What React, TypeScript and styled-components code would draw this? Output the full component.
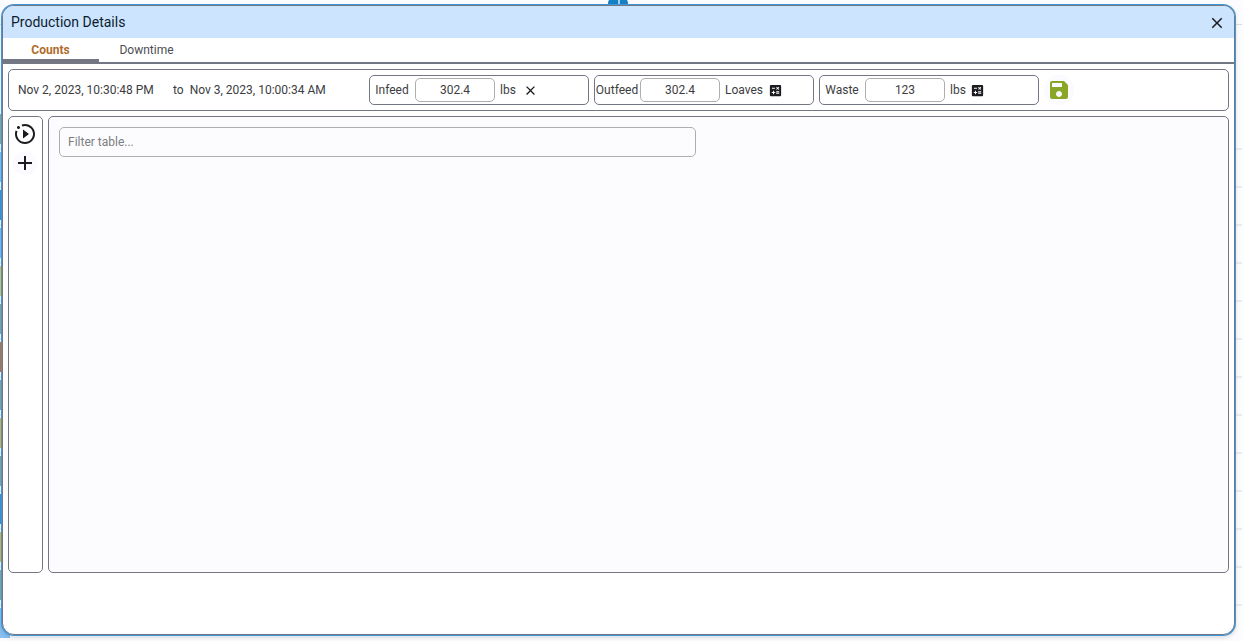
import React, { useState } from "react";
import styled, { createGlobalStyle } from "styled-components";
import { MdAdd, MdCalculate, MdClose, MdSave } from "react-icons/md";

const slate = "#737783";

const GlobalStyle = createGlobalStyle`
  * { box-sizing: border-box; }
  html, body, #root { height: 100%; }
  body {
    margin: 0;
    background: #fcfcff;
    color: #3c3d42;
    font: 12px/16px Roboto, "Liberation Sans", sans-serif;
  }
  button, input { font: inherit; color: inherit; }
`;

const Page = styled.div`
  position: relative;
  height: 100vh;
  overflow: hidden;
`;

const Schedule = styled.div`
  display: flex;
  flex-direction: column;
  height: 100%;
  padding-top: 24px;
`;

const ScheduleHead = styled.div`
  flex: none;
  height: 88px;
  border-top: 1px solid #dcdce0;
`;

const ScheduleRow = styled.div`
  flex: none;
  height: 38px;
  padding: 2px 0 6px;
  border-bottom: 2px solid #ececf0;
`;

const ScheduleBar = styled.div<{ $color: string }>`
  width: 10px;
  height: 30px;
  background: ${(p) => p.$color};
`;

const Marker = styled.div`
  position: absolute;
  top: -2px;
  left: 608px;
  width: 20px;
  height: 10px;
  border-radius: 5px;
  background: linear-gradient(90deg, #1580c4 10px, #a9cfe8 10px 12px, #1580c4 12px);
`;

const Dialog = styled.section`
  position: absolute;
  inset: 5px 7px 6px 2px;
  display: flex;
  flex-direction: column;
  overflow: hidden;
  padding-bottom: 61px;
  border: 1px solid ${slate};
  border-radius: 12px;
  background: #fff;
  box-shadow: 0 0 0 1px #3f97dc, 0 2px 4px 1px rgba(0, 0, 0, 0.12);
`;

const TitleBar = styled.header`
  display: flex;
  flex: none;
  align-items: flex-start;
  justify-content: space-between;
  height: 32px;
  padding: 6px 6px 0 8px;
  background: #cde4ff;
`;

const Title = styled.h1`
  margin: 0;
  color: #0b1d2e;
  font-size: 14px;
  font-weight: 400;
  line-height: 20px;
`;

const IconButton = styled.button<{ $size: number; $color?: string; $tint?: boolean }>`
  display: flex;
  flex: none;
  align-items: center;
  justify-content: center;
  width: ${(p) => p.$size}px;
  height: ${(p) => p.$size}px;
  padding: 0;
  border: 0;
  border-radius: 50%;
  background: ${(p) => (p.$tint ? "#fafaff" : "transparent")};
  color: ${(p) => p.$color ?? "#1b1b1f"};
  cursor: pointer;
`;

const Tabs = styled.nav`
  display: flex;
  flex: none;
  height: 26px;
  border-bottom: 2px solid ${slate};
`;

const Tab = styled.button<{ $active: boolean }>`
  width: 96px;
  padding: 2px 1px 0 0;
  border: 0;
  border-bottom: 3px solid ${(p) => (p.$active ? slate : "transparent")};
  background: none;
  color: ${(p) => (p.$active ? "#b06c2c" : "#4c4e54")};
  font-weight: ${(p) => (p.$active ? 700 : 400)};
  line-height: 20px;
  cursor: pointer;
`;

const Panel = styled.div`
  border: 1px solid ${slate};
  border-radius: 5px;
`;

const Toolbar = styled(Panel)`
  display: flex;
  flex: none;
  align-items: center;
  gap: 5px;
  height: 42px;
  margin: 5px;
  padding-left: 9px;
`;

const Period = styled.div`
  display: flex;
  width: 346px;
`;

const PeriodStart = styled.time`
  width: 155px;
`;

const PeriodEnd = styled.time`
  margin-left: 6px;
`;

const CountBox = styled(Panel)`
  display: flex;
  align-items: center;
  width: 220px;
  height: 30px;
`;

const CountLabel = styled.label`
  width: 45px;
  padding-right: 1px;
  text-align: center;
`;

const CountInput = styled.input`
  width: 80px;
  height: 24px;
  padding: 0;
  border: 1px solid #aeaeb2;
  border-radius: 5px;
  background: #fff;
  text-align: center;
`;

const Unit = styled.span`
  margin: 0 2px 0 5px;
`;

const Body = styled.div`
  display: flex;
  flex: 1;
  gap: 5px;
  min-height: 0;
  margin: 0 5px;
`;

const SideBar = styled(Panel)`
  display: flex;
  flex-direction: column;
  align-items: flex-start;
  gap: 5px;
  width: 35px;
  padding: 5px 4px 0;
`;

const Content = styled(Panel)`
  flex: 1;
  padding: 10px;
  background: #fcfcff;
`;

const FilterInput = styled.input`
  display: block;
  width: 55%;
  height: 30px;
  padding: 0 8px;
  border: 1px solid #aeaeb2;
  border-radius: 5px;
  background: transparent;
  &::placeholder { color: #7c7d82; opacity: 1; }
`;

const MotionPlayIcon = () => (
  <svg width="24" height="24" viewBox="0 0 24 24" fill="currentColor" aria-hidden="true">
    <path d="M22 12c0-5.54-4.46-10-10-10-1.17 0-2.3.19-3.38.56l.7 1.94c.85-.34 1.74-.53 2.68-.53 4.41 0 8.03 3.62 8.03 8.03s-3.62 8.03-8.03 8.03-8.03-3.62-8.03-8.03c0-.94.19-1.88.53-2.72l-1.94-.66C2.19 9.7 2 10.83 2 12c0 5.54 4.46 10 10 10s10-4.46 10-10M5.47 3.97c.85 0 1.53.71 1.53 1.5C7 6.32 6.32 7 5.47 7c-.79 0-1.5-.68-1.5-1.53 0-.79.71-1.5 1.5-1.5M10 16.5v-9l6 4.5" />
  </svg>
);

const rowColors = [
  "#a3a58c", "#88c0f0", "#3b94dd", "#88bdf0", "#f5c43c", "#9aa58c", "#ff6200",
  "#9aa58c", "#f5b51c", "#9aa58c", "#3b94dd", "#f5b51c", "#9aa58c", "#88c0f0",
];

const counts = [
  { id: "infeed", label: "Infeed", value: "302.4", unit: "lbs", manual: true },
  { id: "outfeed", label: "Outfeed", value: "302.4", unit: "Loaves", manual: false },
  { id: "waste", label: "Waste", value: "123", unit: "lbs", manual: false },
];

const tabs = ["Counts", "Downtime"];

export default function App() {
  const [tab, setTab] = useState("Counts");
  return (
    <Page>
      <GlobalStyle />
      <Schedule aria-hidden="true">
        <ScheduleHead />
        {rowColors.map((color, i) => (
          <ScheduleRow key={i}>
            <ScheduleBar $color={color} />
          </ScheduleRow>
        ))}
      </Schedule>
      <Marker />
      <Dialog role="dialog" aria-labelledby="dialog-title">
        <TitleBar>
          <Title id="dialog-title">Production Details</Title>
          <IconButton $size={22} aria-label="Close">
            <MdClose size={18} />
          </IconButton>
        </TitleBar>
        <Tabs>
          {tabs.map((name) => (
            <Tab key={name} type="button" $active={tab === name} onClick={() => setTab(name)}>
              {name}
            </Tab>
          ))}
        </Tabs>
        <Toolbar>
          <Period>
            <PeriodStart>Nov 2, 2023, 10:30:48 PM</PeriodStart>
            <span>to</span>
            <PeriodEnd>Nov 3, 2023, 10:00:34 AM</PeriodEnd>
          </Period>
          {counts.map((c) => (
            <CountBox key={c.id}>
              <CountLabel htmlFor={c.id}>{c.label}</CountLabel>
              <CountInput id={c.id} defaultValue={c.value} />
              <Unit>{c.unit}</Unit>
              <IconButton
                $size={c.manual ? 26 : 20}
                aria-label={c.manual ? `Clear ${c.label}` : `Calculate ${c.label}`}
              >
                {c.manual ? <MdClose size={15} /> : <MdCalculate size={15} />}
              </IconButton>
            </CountBox>
          ))}
          <IconButton $size={30} $color="#8aa626" $tint aria-label="Save">
            <MdSave size={24} />
          </IconButton>
        </Toolbar>
        <Body>
          <SideBar>
            <IconButton $size={24} aria-label="Replay">
              <MotionPlayIcon />
            </IconButton>
            <IconButton $size={24} $tint aria-label="Add">
              <MdAdd size={24} />
            </IconButton>
          </SideBar>
          <Content>
            <FilterInput placeholder="Filter table..." aria-label="Filter table" />
          </Content>
        </Body>
      </Dialog>
    </Page>
  );
}
